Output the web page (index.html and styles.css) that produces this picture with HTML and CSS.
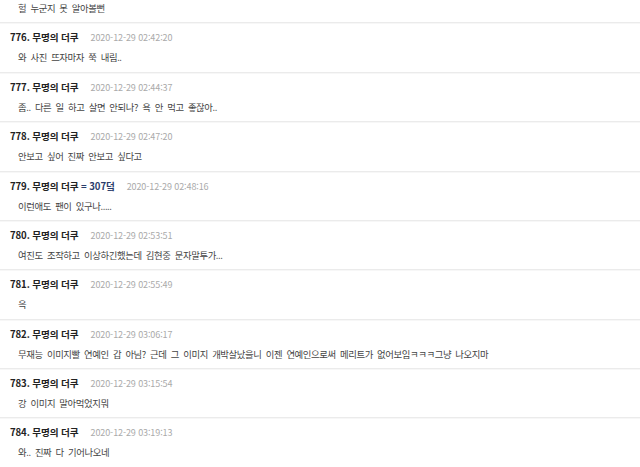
FILE: index.html
```html
<!DOCTYPE html>
<html lang="ko">
<head>
<meta charset="utf-8">
<link rel="stylesheet" href="styles.css">
</head>
<body>
<div class="list">
  <div class="comment partial">
    <div class="text">헐 누군지 못 알아볼뻔</div>
  </div>
  <div class="comment">
    <div class="head"><span class="name">776. 무명의 더쿠</span><span class="date">2020-12-29 02:42:20</span></div>
    <div class="text">와 사진 뜨자마자 쭉 내림..</div>
  </div>
  <div class="comment">
    <div class="head"><span class="name">777. 무명의 더쿠</span><span class="date">2020-12-29 02:44:37</span></div>
    <div class="text">좀.. 다른 일 하고 살면 안되나? 욕 안 먹고 좋잖아..</div>
  </div>
  <div class="comment">
    <div class="head"><span class="name">778. 무명의 더쿠</span><span class="date">2020-12-29 02:47:20</span></div>
    <div class="text">안보고 싶어 진짜 안보고 싶다고</div>
  </div>
  <div class="comment">
    <div class="head"><span class="name">779. 무명의 더쿠 <span class="tag">= 307덬</span></span><span class="date">2020-12-29 02:48:16</span></div>
    <div class="text">이런애도 팬이 있구나.....</div>
  </div>
  <div class="comment">
    <div class="head"><span class="name">780. 무명의 더쿠</span><span class="date">2020-12-29 02:53:51</span></div>
    <div class="text">여진도 조작하고 이상하긴했는데 김현중 문자말투가...</div>
  </div>
  <div class="comment">
    <div class="head"><span class="name">781. 무명의 더쿠</span><span class="date">2020-12-29 02:55:49</span></div>
    <div class="text">윽</div>
  </div>
  <div class="comment">
    <div class="head"><span class="name">782. 무명의 더쿠</span><span class="date">2020-12-29 03:06:17</span></div>
    <div class="text">무재능 이미지빨 연예인 갑 아님? 근데 그 이미지 개박살났을니 이젠 연예인으로써 메리트가 없어보임ㅋㅋㅋ그냥 나오지마</div>
  </div>
  <div class="comment">
    <div class="head"><span class="name">783. 무명의 더쿠</span><span class="date">2020-12-29 03:15:54</span></div>
    <div class="text">강 이미지 말아먹었지뭐</div>
  </div>
  <div class="comment">
    <div class="head"><span class="name">784. 무명의 더쿠</span><span class="date">2020-12-29 03:19:13</span></div>
    <div class="text">와.. 진짜 다 기어나오네</div>
  </div>
</div>
</body>
</html>
```

FILE: styles.css
```css
html, body {
  margin: 0;
  padding: 0;
  background: #fff;
  overflow: hidden;
}
body {
  font-family: "Noto Sans CJK KR", "Noto Sans", sans-serif;
  color: #333;
}
.list {
  margin-top: -2px;
}
.comment {
  padding: 4px 0 4.375px;
  border-bottom: 1px solid #ebebeb;
  box-shadow: 0 1px 0 #f7f7f7;
}
.comment.partial {
  padding-top: 0;
}
.head {
  display: flex;
  align-items: baseline;
  gap: 12px;
  height: 20px;
  line-height: 20px;
  padding-left: 10px;
}
.name {
  font-size: 9.6px;
  font-weight: 700;
  color: #222;
  letter-spacing: -0.1px;
}
.tag {
  color: #2b3d6b;
}
.date {
  font-size: 9px;
  color: #aaa;
  letter-spacing: -0.1px;
}
.text {
  height: 20px;
  line-height: 20px;
  font-size: 9.4px;
  color: #444;
  padding-left: 18px;
  white-space: nowrap;
  letter-spacing: -0.4px;
  word-spacing: 2px;
}
```
